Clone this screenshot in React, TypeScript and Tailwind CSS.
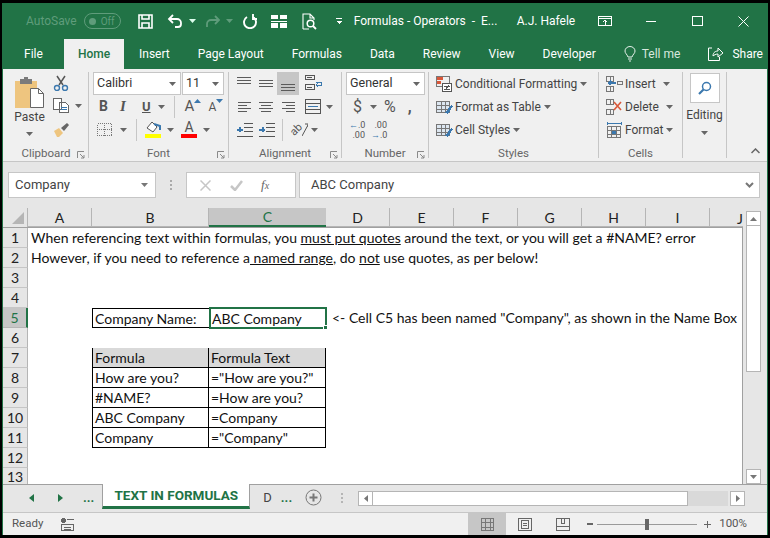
import type { ReactNode } from 'react';

const GREEN = '#217346';

function Caret({ className = '', color = '#666' }: { className?: string; color?: string }) {
  return (
    <svg width="7" height="4" viewBox="0 0 7 4" className={className}>
      <path d="M0 0h7L3.5 4z" fill={color} />
    </svg>
  );
}

// horizontal text-lines glyph for the alignment buttons
function Lines({ rows, w = 14, gap = 3, color = '#5b5b5b' }: { rows: [number, number][]; w?: number; gap?: number; color?: string }) {
  return (
    <svg width={w} height={(rows.length - 1) * gap + 1} shapeRendering="crispEdges">
      {rows.map(([x, l], i) => (
        <rect key={i} x={x} y={i * gap} width={l} height="1" fill={color} />
      ))}
    </svg>
  );
}

function GridIcon({ w = 15, h = 13, color = '#777' }: { w?: number; h?: number; color?: string }) {
  return (
    <svg width={w} height={h} fill="none" stroke={color} shapeRendering="crispEdges">
      <rect x=".5" y=".5" width={w - 1} height={h - 1} />
      <path d={`M${Math.round(w / 3)} 0v${h}M${Math.round((w * 2) / 3)} 0v${h}M0 ${Math.round(h / 3) + 0.5}h${w}M0 ${Math.round((h * 2) / 3) + 0.5}h${w}`} />
    </svg>
  );
}

function Launcher() {
  return (
    <svg width="8" height="8" viewBox="0 0 8 8" fill="none" stroke="#8a8a8a" className="absolute right-[3px] top-[5px]">
      <path d="M.5 7V.5H7M3 3l4 4M7 4v3H4" />
    </svg>
  );
}

function Group({ label, width, children, launcher = true }: { label: string; width: number; children: ReactNode; launcher?: boolean }) {
  return (
    <div className="flex h-full flex-col border-r border-[#c6c6c6]" style={{ width }}>
      <div className="h-[74px] shrink-0">{children}</div>
      <div className="relative flex h-[15px] items-center justify-center text-[11.5px] text-[#666]">
        {label}
        {launcher && <Launcher />}
      </div>
    </div>
  );
}

function TitleBar() {
  return (
    <div className="flex h-[36px] items-center whitespace-nowrap text-white">
      <span className="ml-[23px] text-[12px] text-[#5f9c7b]">AutoSave</span>
      <div className="ml-[7px] flex h-[16px] w-[37px] items-center rounded-full border border-[#5f9c7b] pl-[4px]">
        <span className="h-[7px] w-[7px] rounded-full bg-[#5f9c7b]" />
        <span className="ml-[5px] text-[10px] text-[#5f9c7b]">Off</span>
      </div>
      <svg width="15" height="15" viewBox="0 0 15 15" className="ml-[17px]" fill="none" stroke="#fff" strokeWidth="1.6">
        <path d="M1 1h13v13H1zM4 1v4h7V1M4 14V9h7v5" />
      </svg>
      <svg width="16" height="14" viewBox="0 0 16 14" className="ml-[14px]" fill="none" stroke="#fff" strokeWidth="1.8">
        <path d="M6 1L2 5l4 4M2 5h8a4 4 0 0 1 4 4v1a3 3 0 0 1-3 3H8" />
      </svg>
      <Caret className="ml-[6px]" color="#dfe" />
      <svg width="16" height="14" viewBox="0 0 16 14" className="ml-[9px]" fill="none" stroke="#5f9c7b" strokeWidth="1.8">
        <path d="M10 2l4 4-4 4M14 6H6a4 4 0 0 0-4 4v3" />
      </svg>
      <Caret className="ml-[5px]" color="#5f9c7b" />
      <svg width="16" height="15" viewBox="0 0 16 15" className="ml-[9px]" fill="none" stroke="#fff" strokeWidth="1.9">
        <path d="M5 3a6 6 0 1 0 6 0M11 0v5h4" />
      </svg>
      <svg width="16" height="13" viewBox="0 0 16 13" className="ml-[13px]" fill="#fff" shapeRendering="crispEdges">
        <path d="M0 0h7v4H0zM9 0h7v4H9zM0 6h16v1H0zM0 8h7v5H0zM9 8h7v5H9z" />
      </svg>
      <svg width="15" height="17" viewBox="0 0 15 17" className="ml-[15px]" fill="none" stroke="#fff" strokeWidth="1.1">
        <path d="M1 16V1h7l4 4v2M8 1v4h4M1 16h6" />
        <circle cx="8.5" cy="10.5" r="3.3" strokeWidth="1.5" />
        <path d="M11 13l3 3" strokeWidth="1.8" />
      </svg>
      <svg width="6" height="6" viewBox="0 0 6 6" className="ml-[19px]" fill="#fff" shapeRendering="crispEdges">
        <path d="M0 0h6v1H0zM0 3h6L3 6z" />
      </svg>
      <span className="ml-[12px] w-[143px] whitespace-pre text-[12px]">Formulas - Operators  -  E...</span>
      <span className="ml-[20px] w-[55px] text-[12px]">A.J. Hafele</span>
      <svg width="14" height="10" viewBox="0 0 14 10" className="ml-[26px]" fill="none" stroke="#fff" shapeRendering="crispEdges">
        <path d="M.5.5h13v9H.5zM1 2.5h12M7 8.5V4M5 6l2-2 2 2" />
      </svg>
      <span className="ml-[34px] h-px w-[10px] bg-white" />
      <span className="ml-[36px] h-[10px] w-[11px] border border-white" />
      <svg width="11" height="11" viewBox="0 0 11 11" className="ml-[35px]" stroke="#fff">
        <path d="M.5.5l10 10M10.5.5l-10 10" />
      </svg>
    </div>
  );
}

function TabBar() {
  const tabs = ['Insert', 'Page Layout', 'Formulas', 'Data', 'Review', 'View', 'Developer'];
  return (
    <div className="flex h-[30px] items-center whitespace-nowrap text-[12px] text-white">
      <span className="ml-[21px] w-[40px]">File</span>
      <span className="flex h-full w-[60px] items-center justify-center bg-[#f0f0f0] font-medium" style={{ color: GREEN }}>
        Home
      </span>
      {tabs.map((t, i) => (
        <span key={t} className={i === 0 ? 'ml-[15px]' : 'ml-[28px]'}>
          {t}
        </span>
      ))}
      <svg width="12" height="16" viewBox="0 0 12 16" className="ml-[28px]" fill="none" stroke="#e8f2ec">
        <path d="M4 11C3 8 1 7.500 1 5a5 4.500 0 0 1 10 0c0 2.500-2 3-3 6zM4 13h4M5 15h2" />
      </svg>
      <span className="ml-[6px] text-[#d8e8de]">Tell me</span>
      <svg width="16" height="14" viewBox="0 0 16 14" className="ml-[28px]" fill="none" stroke="#fff">
        <path d="M4 1H.5v12.500h11V10M5 9c0-4 3-5 5-5V1l5 5-5 4V7C8 7 6 8 5 9z" />
      </svg>
      <span className="ml-[8px]">Share</span>
    </div>
  );
}

function Clipboard() {
  return (
    <div className="flex h-full">
      <div className="ml-[9px] flex w-[33px] flex-col items-center pt-[5px]">
        <svg width="29" height="31" viewBox="0 0 29 31">
          <path d="M0 4h22v27H0z" fill="#eec57f" />
          <path d="M5 2h12v5H5z" fill="#7b7b7b" />
          <path d="M9 0h4v3H9z" fill="#7b7b7b" />
          <path d="M15.500 11.500h8l5 5v14h-13z" fill="#fff" stroke="#666" />
          <path d="M23.500 11.500v5h5" fill="none" stroke="#666" />
        </svg>
        <span className="mt-[2px] text-[12px] leading-[15px] text-[#444]">Paste</span>
        <Caret className="mt-[7px]" />
      </div>
      <div className="ml-[7px] flex flex-col pt-[3px]">
        <svg width="16" height="16" viewBox="0 0 16 16" fill="none">
          <path d="M4 1l6 9M12 1L6 10" stroke="#555" strokeWidth="1.5" />
          <circle cx="4" cy="13" r="2.500" stroke="#3b78ae" strokeWidth="1.400" />
          <circle cx="12" cy="13" r="2.500" stroke="#3b78ae" strokeWidth="1.400" />
        </svg>
        <div className="mt-[7px] flex items-center">
          <svg width="16" height="15" viewBox="0 0 16 15" fill="#fff" stroke="#666" shapeRendering="crispEdges">
            <path d="M.5.500h8v11h-8zM6.500 4.500h6l3 3v7h-9z" />
            <path d="M8 9.500h6M8 11.500h6" stroke="#3b78ae" />
          </svg>
          <Caret className="ml-[6px]" />
        </div>
        <svg width="17" height="15" viewBox="0 0 17 15" className="mt-[9px]">
          <path d="M1 9l5-3 4 5-4 4H4z" fill="#eec57f" />
          <path d="M8 6l6-5 2 2-5 6z" fill="#666" />
        </svg>
      </div>
    </div>
  );
}

function FontGroup() {
  return (
    <div className="flex h-full flex-col pl-[4px]">
      <div className="flex">
        <div className="flex h-[23px] w-[88px] items-center justify-between border border-[#c6c6c6] bg-white px-[3px] pr-[4px] text-[12.500px] text-[#333]">
          Calibri
          <Caret />
        </div>
        <div className="ml-px flex h-[23px] w-[42px] items-center justify-between border border-[#c6c6c6] bg-white px-[3px] pr-[4px] text-[12.500px] text-[#333]">
          11
          <Caret />
        </div>
      </div>
      <div className="flex h-[23px] items-center">
        <span className="ml-[6px] w-[21px] text-[14px] font-bold text-[#555]">B</span>
        <span className="w-[22px] font-['Liberation_Serif',serif] text-[15px] font-bold italic text-[#555]">I</span>
        <span className="text-[13px] font-bold text-[#555] underline">U</span>
        <Caret className="ml-[7px]" />
        <span className="ml-[9px] h-[22px] w-px bg-[#c6c6c6]" />
        <span className="ml-[10px] text-[15px] leading-none text-[#555]">A</span>
        <svg width="7" height="4" className="-mt-[12px]">
          <path d="M0 4h7L3.500 0z" fill="#3b78ae" />
        </svg>
        <span className="ml-[7px] text-[12px] leading-none text-[#555]">A</span>
        <Caret className="-mt-[12px]" color="#3b78ae" />
      </div>
      <div className="flex h-[23px] items-center">
        <span className="ml-[4px]">
          <svg width="15" height="13" fill="none" stroke="#777" strokeDasharray="1 1" shapeRendering="crispEdges">
            <path d="M.5.500h14v12H.5zM7.500 0v13M0 6.500h15" />
          </svg>
        </span>
        <Caret className="ml-[8px]" />
        <span className="ml-[9px] h-[22px] w-px bg-[#c6c6c6]" />
        <div className="ml-[7px] flex w-[17px] flex-col items-center">
          <svg width="16" height="12" viewBox="0 0 16 12" fill="none">
            <path d="M2 7l5-6 5 5-4 5z" fill="#fff" stroke="#555" />
            <path d="M9 3l6 2v4" stroke="#3b78ae" strokeWidth="2" />
          </svg>
          <span className="mt-px h-[4px] w-[16px] bg-[#ffff00]" />
        </div>
        <Caret className="ml-[6px]" />
        <div className="ml-[7px] flex w-[16px] flex-col items-center">
          <span className="h-[13px] text-[14px] leading-[13px] text-[#555]">A</span>
          <span className="h-[4px] w-[16px] bg-[#ff0000]" />
        </div>
        <Caret className="ml-[6px]" />
      </div>
    </div>
  );
}

function Alignment() {
  const l: [number, number][] = [[1, 13], [1, 9], [1, 13], [1, 9]];
  const c: [number, number][] = [[0, 14], [2, 10], [0, 14], [2, 10]];
  const r: [number, number][] = [[1, 13], [5, 9], [1, 13], [5, 9]];
  const t: [number, number][] = [[0, 14], [0, 14], [0, 14]];
  return (
    <div className="flex h-full flex-col pl-[8px]">
      <div className="flex h-[23px]">
        <span className="mt-[5px] w-[22px]">
          <Lines rows={t} />
        </span>
        <span className="mt-[8px] w-[18px]">
          <Lines rows={t} />
        </span>
        <span className="flex h-[23px] w-[22px] items-end justify-center bg-[#c6c6c6] pb-[4px]">
          <Lines rows={t} />
        </span>
        <svg width="17" height="16" viewBox="0 0 17 16" className="ml-[6px] mt-[3px]" fill="none" stroke="#555" shapeRendering="crispEdges">
          <path d="M.5.500h9v4h-9zM.5 9.500h9v5h-9zM2 2.500h5M2 12h5" />
          <path d="M11 7h5v3h-5M13 8l-2 2 2 2" stroke="#3b78ae" />
        </svg>
      </div>
      <div className="flex h-[23px] items-center">
        <span className="w-[22px]"><Lines rows={l} /></span>
        <span className="w-[22px]"><Lines rows={c} /></span>
        <span className="w-[24px]"><Lines rows={r} /></span>
        <svg width="16" height="15" viewBox="0 0 16 15" fill="none" stroke="#555" shapeRendering="crispEdges">
          <path d="M.5.500h15v14H.5zM0 4.500h16M0 10.500h16" />
          <path d="M3 7.500h10" stroke="#3b78ae" />
        </svg>
        <Caret className="ml-[5px]" />
      </div>
      <div className="flex h-[23px] items-center">
        <svg width="17" height="14" viewBox="0 0 17 14" className="-ml-px" fill="none" stroke="#555" shapeRendering="crispEdges">
          <path d="M8 .500h9M8 4.500h9M8 8.500h9M1 13.500h16" />
          <path d="M1 6.500h6M3.500 4v5" stroke="#3b78ae" strokeWidth="2" />
        </svg>
        <svg width="17" height="14" viewBox="0 0 17 14" className="ml-[5px]" fill="none" stroke="#555" shapeRendering="crispEdges">
          <path d="M8 .500h9M8 4.500h9M8 8.500h9M1 13.500h16" />
          <path d="M1 6.500h6M5 4v5" stroke="#3b78ae" strokeWidth="2" />
        </svg>
        <span className="ml-[7px] h-[22px] w-px bg-[#c6c6c6]" />
        <span className="ml-[7px] -rotate-45 text-[11px] leading-none text-[#555]">ab</span>
        <svg width="6" height="14" viewBox="0 0 6 14" fill="none" stroke="#555">
          <path d="M0 13L6 2M3 1h3v3" />
        </svg>
        <Caret className="ml-[3px]" />
      </div>
    </div>
  );
}

function NumberGroup() {
  return (
    <div className="flex h-full flex-col pl-[4px]">
      <div className="flex h-[23px] w-[79px] items-center justify-between border border-[#c6c6c6] bg-white pl-[3px] pr-[4px] text-[12.500px] text-[#333]">
        General
        <Caret />
      </div>
      <div className="flex h-[23px] items-center text-[#555]">
        <span className="ml-[7px] w-[15px] text-[16px]">$</span>
        <Caret className="ml-[2px]" />
        <span className="ml-[7px] text-[16px]">%</span>
        <span className="ml-[12px] text-[16px] font-bold leading-none">,</span>
      </div>
      <div className="flex h-[23px] items-center text-[#555]">
        <div className="ml-[3px] flex w-[16px] flex-col text-[9px] leading-[10px]">
          <span className="text-right"><span className="text-[#3b78ae]">←</span>.0</span>
          <span className="text-right">.00</span>
        </div>
        <div className="ml-[6px] flex w-[16px] flex-col text-[9px] leading-[10px]">
          <span className="text-right">.00</span>
          <span className="text-right"><span className="text-[#3b78ae]">→</span>.0</span>
        </div>
      </div>
    </div>
  );
}

function CmdRow({ icon, label, w }: { icon: ReactNode; label: string; w?: number }) {
  return (
    <div className="flex h-[23px] items-center text-[12px] text-[#444]">
      <span className="flex w-[19px] shrink-0 items-center">{icon}</span>
      <span style={w ? { width: w } : undefined}>{label}</span>
      <Caret className="ml-[3px]" />
    </div>
  );
}

function TableIcon({ top = false }: { top?: boolean }) {
  return (
    <svg width="17" height="16" viewBox="0 0 17 16" fill="none" stroke="#777" shapeRendering="crispEdges">
      <path d="M.5 2.500h13v11H.5z" fill="#dce6f0" />
      {top && <path d="M1 3h6v4H1z" fill="#d9583a" stroke="none" />}
      <path d="M.5 6.500h13M.5 10.500h13M5 3v11M9.500 3v11" />
      <path d="M9 14l6-8 2 1-5 8z" fill="#3b78ae" stroke="none" />
    </svg>
  );
}

function Styles() {
  return (
    <div className="flex h-full flex-col pl-[7px]">
      <CmdRow
        label="Conditional Formatting"
        icon={
          <svg width="16" height="16" viewBox="0 0 16 16" fill="none" stroke="#777" shapeRendering="crispEdges">
            <path d="M.5.500h13v10H.5z" />
            <path d="M1 1h6v3H1z" fill="#d9583a" stroke="none" />
            <path d="M1 5h4v3H1z" fill="#d9583a" stroke="none" />
            <path d="M6.500 7.500h9v8h-9z" fill="#fff" stroke="#555" />
            <path d="M8 10h6M8 13h6M12.500 9l-3 5" stroke="#555" />
          </svg>
        }
      />
      <CmdRow label="Format as Table" icon={<TableIcon />} />
      <CmdRow label="Cell Styles" icon={<TableIcon />} />
    </div>
  );
}

function Cells() {
  return (
    <div className="flex h-full flex-col pl-[7px]">
      <CmdRow
        label="Insert"
        w={35}
        icon={
          <svg width="17" height="16" viewBox="0 0 17 16" fill="none" stroke="#777" shapeRendering="crispEdges">
            <path d="M.5.500h7v5h-7zM.5 10.500h7v5h-7zM4 1v4M4 11v4M11.500 5.500h5v3h-5z" />
            <path d="M10 7H3M5 5L3 7l2 2" stroke="#3b78ae" strokeWidth="1.500" />
          </svg>
        }
      />
      <CmdRow
        label="Delete"
        w={38}
        icon={
          <svg width="17" height="16" viewBox="0 0 17 16" fill="none" stroke="#777" shapeRendering="crispEdges">
            <path d="M.5.500h7v5h-7zM.5 10.500h7v5h-7zM4 1v4M4 11v4" />
            <path d="M8 3l7 8M15 3l-7 8" stroke="#d9583a" strokeWidth="1.600" shapeRendering="auto" />
          </svg>
        }
      />
      <CmdRow
        label="Format"
        icon={
          <svg width="17" height="16" viewBox="0 0 17 16" fill="none" stroke="#777" shapeRendering="crispEdges">
            <path d="M1 1.500h14M1 0v3M15 0v3" stroke="#3b78ae" />
            <path d="M1.500 4.500h13v11h-13zM1 8.500h14M1 12h14M5.500 5v10M10 5v10" />
            <path d="M6 9h4v3H6z" fill="#3b78ae" stroke="none" />
          </svg>
        }
      />
    </div>
  );
}

function Editing() {
  return (
    <div className="flex h-full flex-col items-center pt-px">
      <div className="flex h-[30px] w-[30px] items-center justify-center border border-[#c6c6c6] bg-white">
        <svg width="14" height="14" viewBox="0 0 14 14" fill="none" stroke="#3b78ae">
          <circle cx="8.500" cy="5.500" r="4" strokeWidth="1.500" />
          <path d="M5.500 8.500L1 13" strokeWidth="2.200" />
        </svg>
      </div>
      <span className="mt-[5px] text-[12px] leading-[15px] text-[#444]">Editing</span>
      <Caret className="mt-[8px]" />
    </div>
  );
}

function Ribbon() {
  return (
    <div className="flex h-[93px] border-b border-[#c6c6c6] bg-[#f0f0f0] py-[3px] pl-px">
      <Group label="Clipboard" width={85}><Clipboard /></Group>
      <Group label="Font" width={140}><FontGroup /></Group>
      <Group label="Alignment" width={113}><Alignment /></Group>
      <Group label="Number" width={87}><NumberGroup /></Group>
      <Group label="Styles" width={170} launcher={false}><Styles /></Group>
      <Group label="Cells" width={84} launcher={false}><Cells /></Group>
      <Group label="" width={44} launcher={false}><Editing /></Group>
      <div className="flex flex-1 items-end justify-end pb-[4px] pr-[7px]">
        <svg width="9" height="6" viewBox="0 0 9 6" fill="none" stroke="#666" strokeWidth="1.500">
          <path d="M.5 5l4-4 4 4" />
        </svg>
      </div>
    </div>
  );
}

function FormulaBar() {
  return (
    <div className="flex h-[46px] items-start pl-[5px] pr-[7px] pt-[10px]">
      <div className="flex h-[26px] w-[148px] items-center justify-between border border-[#c6c6c6] bg-white pl-[6px] pr-[7px] text-[13px] text-[#444]">
        Company
        <Caret color="#777" />
      </div>
      <div className="ml-[14px] flex h-[26px] w-[2px] flex-col items-center justify-center gap-[2px]">
        <span className="h-[2px] w-[2px] bg-[#aaa]" />
        <span className="h-[2px] w-[2px] bg-[#aaa]" />
        <span className="h-[2px] w-[2px] bg-[#aaa]" />
      </div>
      <div className="ml-[14px] flex h-[26px] w-[110px] items-center border border-[#c6c6c6] bg-white">
        <svg width="11" height="11" viewBox="0 0 11 11" className="ml-[13px]" stroke="#c6c6c6" strokeWidth="1.500">
          <path d="M.5.500l10 10M10.500.500l-10 10" />
        </svg>
        <svg width="13" height="11" viewBox="0 0 13 11" className="ml-[19px]" fill="none" stroke="#c6c6c6" strokeWidth="2.500">
          <path d="M1 6l4 4 7-9" />
        </svg>
        <span className="ml-[18px] font-['Liberation_Serif',serif] text-[13px] italic text-[#666]">f<span className="text-[10px]">x</span></span>
      </div>
      <div className="ml-[3px] flex h-[26px] flex-1 items-center justify-between border border-[#c6c6c6] bg-white pl-[11px] pr-[5px] text-[13px] text-[#444]">
        ABC Company
        <svg width="9" height="6" viewBox="0 0 9 6" fill="none" stroke="#777" strokeWidth="2">
          <path d="M1 1l3.500 3.500L8 1" />
        </svg>
      </div>
    </div>
  );
}

const columns: [string, number][] = [
  ['A', 64],
  ['B', 117],
  ['C', 117],
  ['D', 64],
  ['E', 64],
  ['F', 64],
  ['G', 64],
  ['H', 64],
  ['I', 64],
];

function ColumnHeaders() {
  return (
    <div className="flex h-[19px]">
      <div className="flex w-[25px] shrink-0 items-end justify-end border-r border-[#b5b5b5] pb-[3px] pr-[3px]">
        <svg width="12" height="12">
          <path d="M12 0v12H0z" fill="#b5b5b5" />
        </svg>
      </div>
      {columns.map(([c, w]) => (
        <div
          key={c}
          style={{ width: w }}
          className={
            c === 'C'
              ? 'flex shrink-0 items-center justify-center border-b-2 border-[#217346] bg-[#c6c6c6] text-[#217346]'
              : 'flex shrink-0 items-center justify-center border-b border-r border-[#b5b5b5] text-[#222]'
          }
        >
          {c}
        </div>
      ))}
      <div className="flex-1 overflow-hidden border-b border-[#b5b5b5] text-right text-[#222]">J</div>
    </div>
  );
}

function Cell({ w, children, fill = false, box = false }: { w: number; children?: ReactNode; fill?: boolean; box?: boolean }) {
  return (
    <div
      style={{ width: w }}
      className={`flex h-[20px] shrink-0 items-center whitespace-nowrap pl-[2px] ${fill ? 'bg-[#d9d9d9]' : ''} ${box ? 'border-r border-b border-black' : ''}`}
    >
      {children}
    </div>
  );
}

function Row({ n, children, active = false }: { n: number; children?: ReactNode; active?: boolean }) {
  return (
    <div className="flex h-[20px]">
      <div
        className={
          active
            ? 'flex w-[25px] shrink-0 items-center justify-center border-b border-r-2 border-b-[#b5b5b5] border-r-[#217346] bg-[#c6c6c6] text-[#217346]'
            : 'flex w-[25px] shrink-0 items-center justify-center border-b border-r border-[#c6c6c6] border-r-[#b5b5b5] bg-[#e6e6e6] text-[#222]'
        }
      >
        {n}
      </div>
      <div className="flex min-w-0 flex-1 text-[#111]">{children}</div>
    </div>
  );
}

const tableRows = [
  ['How are you?', '="How are you?"'],
  ['#NAME?', '=How are you?'],
  ['ABC Company', '=Company'],
  ['Company', '="Company"'],
];

function Sheet() {
  return (
    <div className="h-[257px] overflow-hidden border-r border-t border-[#a0a0a0] bg-white">
      <Row n={1}>
        <span className="whitespace-nowrap pl-[3px] leading-[20px]">
          When referencing text within formulas, you <span className="underline">must put quotes</span> around the text, or you will get a #NAME? error
        </span>
      </Row>
      <Row n={2}>
        <span className="whitespace-nowrap pl-[3px] leading-[20px]">
          However, if you need to reference a<span className="underline"> named range</span>, do <span className="underline">not</span> use quotes, as per below!
        </span>
      </Row>
      <Row n={3} />
      <Row n={4} />
      <Row n={5} active>
        <Cell w={64} />
        <div className="flex h-[20px] w-[117px] shrink-0 items-center border-y border-l border-black pl-[2px]">Company Name:</div>
        <div className="relative z-10 -my-px flex h-[22px] w-[118px] shrink-0 items-center border-2 border-[#217346] bg-white pl-[1px]">
          ABC Company
          <span className="absolute -bottom-[3px] -right-[3px] h-[5px] w-[5px] border border-white bg-[#217346]" />
        </div>
        <span className="whitespace-nowrap pl-[5px] leading-[20px]">{'<- Cell C5 has been named "Company", as shown in the Name Box'}</span>
      </Row>
      <Row n={6} />
      <Row n={7}>
        <Cell w={64} />
        <div className="flex border-y border-l border-black">
          <div className="-mt-px flex">
            <Cell w={116} fill box>Formula</Cell>
            <Cell w={117} fill box>Formula Text</Cell>
          </div>
        </div>
      </Row>
      {tableRows.map(([a, b], i) => (
        <Row key={a} n={8 + i}>
          <Cell w={64} />
          <div className="flex border-l border-black">
            <Cell w={116} box>{a}</Cell>
            <Cell w={117} box>{b}</Cell>
          </div>
        </Row>
      ))}
      <Row n={12} />
      {/* last row is partly hidden by the tab strip */}
      <div className="flex h-[16px]">
        <div className="w-[25px] shrink-0 border-r border-[#b5b5b5] bg-[#e6e6e6] pt-[2px] text-center leading-[14px] text-[#222]">13</div>
      </div>
    </div>
  );
}

function VScroll() {
  return (
    <div className="ml-[3px] flex h-full w-[15px] flex-col">
      <div className="mt-[3px] flex h-[15px] items-center justify-center border border-[#b5b5b5] bg-white">
        <svg width="7" height="4"><path d="M0 4h7L3.500 0z" fill="#777" /></svg>
      </div>
      <div className="h-[146px] border-x border-b border-[#b5b5b5] bg-white" />
      <div className="flex-1" />
      <div className="flex h-[15px] items-center justify-center border border-[#b5b5b5] bg-white">
        <Caret color="#777" />
      </div>
    </div>
  );
}

function SheetTabs() {
  return (
    <div className="flex h-[28px] items-start border-t border-[#a0a0a0] pr-[22px]">
      <svg width="5" height="8" className="ml-[26px] mt-[9px]"><path d="M5 0v8L0 4z" fill={GREEN} /></svg>
      <svg width="5" height="8" className="ml-[24px] mt-[9px]"><path d="M0 0v8l5-4z" fill={GREEN} /></svg>
      <span className="ml-[20px] mt-[2px] text-[13px] font-bold leading-[22px]" style={{ color: GREEN }}>...</span>
      <div className="ml-[8px] -mt-px flex h-[25px] w-[148px] items-center justify-center border-x border-[#a0a0a0] border-b-[3px] border-b-[#217346] bg-white text-[13.500px] font-bold" style={{ color: GREEN }}>
        TEXT IN FORMULAS
      </div>
      <span className="ml-[13px] mt-[3px] text-[13px] leading-[20px] text-[#444]">D</span>
      <span className="ml-[9px] mt-[2px] text-[13px] font-bold leading-[22px]" style={{ color: GREEN }}>...</span>
      <svg width="17" height="17" viewBox="0 0 17 17" className="ml-[13px] mt-[4px]" fill="none" stroke="#777">
        <circle cx="8.500" cy="8.500" r="7.500" />
        <path d="M4.500 8.500h8M8.500 4.500v8" strokeWidth="2" />
      </svg>
      <div className="ml-[19px] mt-[8px] flex h-[10px] w-[2px] flex-col justify-between">
        <span className="h-[2px] w-[2px] bg-[#b5b5b5]" />
        <span className="h-[2px] w-[2px] bg-[#b5b5b5]" />
        <span className="h-[2px] w-[2px] bg-[#b5b5b5]" />
      </div>
      <div className="ml-[15px] mt-[6px] flex h-[15px] flex-1">
        <div className="flex w-[15px] items-center justify-center border border-[#b5b5b5] bg-white">
          <svg width="4" height="7"><path d="M4 0v7L0 3.500z" fill="#777" /></svg>
        </div>
        <div className="w-[315px] border-y border-r border-[#b5b5b5] bg-white" />
        <div className="flex-1 bg-[#d9d9d9]" />
        <div className="ml-[2px] flex w-[15px] items-center justify-center border border-[#b5b5b5] bg-white">
          <svg width="4" height="7"><path d="M0 0v7l4-3.500z" fill="#777" /></svg>
        </div>
      </div>
    </div>
  );
}

function StatusBar() {
  return (
    <div className="flex h-[23px] items-center border-t border-[#c6c6c6] bg-[#f0f0f0] text-[11.500px] text-[#555]">
      <span className="ml-[9px]">Ready</span>
      <svg width="13" height="13" viewBox="0 0 13 13" className="ml-[18px]" fill="none" stroke="#666" shapeRendering="crispEdges">
        <circle cx="2.500" cy="2.500" r="2" fill="#666" />
        <path d="M6 1.500h7M.5 6.500h12v6H.5zM3 9h7M3 11h7" />
      </svg>
      <div className="ml-auto flex h-full w-[38px] items-center justify-center bg-[#c6c6c6]">
        <GridIcon w={13} h={13} />
      </div>
      <svg width="14" height="13" viewBox="0 0 14 13" className="ml-[12px]" fill="none" stroke="#666" shapeRendering="crispEdges">
        <path d="M.5.500h13v12H.5zM3.500 2.500h7v8h-7zM5 5h4M5 7h4" />
      </svg>
      <svg width="14" height="13" viewBox="0 0 14 13" className="ml-[24px]" fill="none" stroke="#666" shapeRendering="crispEdges">
        <path d="M.5.500h13v12H.5zM0 8.500h14M5.500 1v4h3V1" />
      </svg>
      <span className="ml-[17px] h-[2px] w-[6px] bg-[#666]" />
      <div className="relative ml-[4px] h-px w-[100px] bg-[#9a9a9a]">
        <span className="absolute left-[48px] top-[-5px] h-[11px] w-[4px] bg-[#666]" />
      </div>
      <svg width="7" height="7" className="ml-[7px]" fill="#666"><path d="M0 3h7v1H0zM3 0h1v7H3z" /></svg>
      <span className="ml-[8px] mr-[20px]">100%</span>
    </div>
  );
}

export default function App() {
  return (
    <div className="flex h-[538px] w-[770px] flex-col overflow-hidden border-x-2 border-b-[3px] border-t-[3px] border-black bg-[#e6e6e6] font-['Roboto',sans-serif]">
      <div className="flex h-full flex-col border-x border-[#217346]">
        <div className="bg-[#217346]">
          <TitleBar />
          <TabBar />
        </div>
        <Ribbon />
        <FormulaBar />
        <div className="flex min-h-0 flex-1 pr-[6px] font-['Lato',sans-serif] text-[14px]">
          <div className="flex min-w-0 flex-1 flex-col">
            <ColumnHeaders />
            <Sheet />
          </div>
          <VScroll />
        </div>
        <div className="shrink-0">
          <SheetTabs />
          <StatusBar />
        </div>
      </div>
    </div>
  );
}
